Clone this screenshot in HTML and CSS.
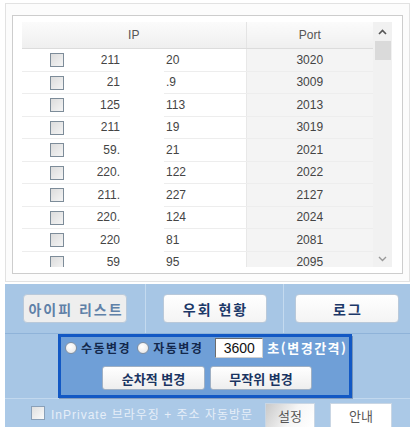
FILE: index.html
```html
<!DOCTYPE html>
<html lang="ko">
<head>
  <meta charset="UTF-8" />
  <title>IP 우회</title>
  <link rel="stylesheet" href="styles.css">
</head>
<body>
  <div class="frame">
    <div class="listbox">
      <div class="grid-wrap">
        <table class="grid">
          <colgroup>
            <col class="c-chk"><col class="c-ipa"><col class="c-gap"><col class="c-ipb"><col class="c-port">
          </colgroup>
          <thead>
            <tr><th colspan="4">IP</th><th class="port">Port</th></tr>
          </thead>
          <tbody>
            <tr><td><span class="chk"></span></td><td class="ipa">211</td><td class="gap"></td><td class="ipb">20</td><td class="port">3020</td></tr>
            <tr><td><span class="chk"></span></td><td class="ipa">21</td><td class="gap"></td><td class="ipb">.9</td><td class="port">3009</td></tr>
            <tr><td><span class="chk"></span></td><td class="ipa">125</td><td class="gap"></td><td class="ipb">113</td><td class="port">2013</td></tr>
            <tr><td><span class="chk"></span></td><td class="ipa">211</td><td class="gap"></td><td class="ipb">19</td><td class="port">3019</td></tr>
            <tr><td><span class="chk"></span></td><td class="ipa">59.</td><td class="gap"></td><td class="ipb">21</td><td class="port">2021</td></tr>
            <tr><td><span class="chk"></span></td><td class="ipa">220.</td><td class="gap"></td><td class="ipb">122</td><td class="port">2022</td></tr>
            <tr><td><span class="chk"></span></td><td class="ipa">211.</td><td class="gap"></td><td class="ipb">227</td><td class="port">2127</td></tr>
            <tr><td><span class="chk"></span></td><td class="ipa">220.</td><td class="gap"></td><td class="ipb">124</td><td class="port">2024</td></tr>
            <tr><td><span class="chk"></span></td><td class="ipa">220</td><td class="gap"></td><td class="ipb">81</td><td class="port">2081</td></tr>
            <tr><td><span class="chk"></span></td><td class="ipa">59</td><td class="gap"></td><td class="ipb">95</td><td class="port">2095</td></tr>
          </tbody>
        </table>
      </div>
      <div class="scrollbar">
        <svg class="arrow" width="9" height="6" viewBox="0 0 9 6"><path d="M1 5 L4.5 1.5 L8 5" fill="none" stroke="#555" stroke-width="1.6"/></svg>
        <div class="thumb"></div>
        <svg class="arrow down" width="9" height="6" viewBox="0 0 9 6"><path d="M1 1 L4.5 4.5 L8 1" fill="none" stroke="#999" stroke-width="1.4"/></svg>
      </div>
    </div>
  </div>

  <div class="panel">
    <div class="tabs">
      <div class="tab"><button class="tbtn active">아이피 리스트</button></div>
      <div class="tab"><button class="tbtn">우회 현황</button></div>
      <div class="tab last"><button class="tbtn">로그</button></div>
    </div>
    <div class="middle">
      <div class="popup">
        <div class="mode">
          <span class="radio"></span><span class="lbl">수동변경</span>
          <span class="radio second"></span><span class="lbl">자동변경</span>
          <input class="interval" type="text" value="3600">
          <span class="sec">초(변경간격)</span>
        </div>
        <div class="actions">
          <button class="pbtn">순차적 변경</button>
          <button class="pbtn">무작위 변경</button>
        </div>
      </div>
    </div>
    <div class="bottom">
      <span class="chk light"></span>
      <span class="private">InPrivate 브라우징 + 주소 자동방문</span>
      <button class="sbtn setting">설정</button>
      <button class="sbtn">안내</button>
    </div>
  </div>
</body>
</html>
```

FILE: styles.css
```css
body {
  margin: 0;
  background-color: white;
  font-family: "Liberation Sans", "Noto Sans CJK KR", sans-serif;
}

.frame {
  margin: 3px 5px 0 5px;
  padding: 11px 6px 7px 6px;
  border: 1px solid #e2e2e2;
  background-color: #fcfcfc;
}

.listbox {
  display: flex;
  padding: 6px 10px 6px 9px;
  border: 1px solid #cdcdcd;
  background-color: white;
}

.grid-wrap {
  width: 351px;
  height: 245px;
  overflow: hidden;
}

.grid {
  width: 351px;
  border-collapse: collapse;
  table-layout: fixed;
  font-size: 12px;
  color: #444;
}

.c-chk { width: 70px; }
.c-ipa { width: 28px; }
.c-gap { width: 44px; }
.c-ipb { width: 82px; }
.c-port { width: 127px; }

.grid th {
  height: 26px;
  padding: 0;
  font-weight: normal;
  color: #555;
  background: linear-gradient(#fbfbfb, #efefef);
  border-bottom: 1px solid #dcdcdc;
}

.grid th.port {
  border-left: 1px solid #e4e4e4;
}

.grid td {
  height: 21.5px;
  padding: 0;
  text-align: center;
  border-bottom: 1px solid #ededed;
  white-space: nowrap;
  overflow: hidden;
}

.grid td.ipa {
  text-align: right;
}

.grid td.gap {
  border-bottom-color: white;
}

.grid td.ipb {
  text-align: left;
  padding-left: 2px;
}

.grid td.port {
  background-color: #f4f4f4;
  border-left: 1px solid #e8e8e8;
}

.chk {
  display: inline-block;
  width: 12px;
  height: 12px;
  vertical-align: middle;
  border: 1px solid #7d8c99;
  background: linear-gradient(135deg, #dcdcdc, #f4f4f4);
}

.scrollbar {
  position: relative;
  width: 19px;
  height: 245px;
  background-color: #f1f1f1;
}

.arrow {
  display: block;
  margin: 7px auto 0 auto;
}

.arrow.down {
  position: absolute;
  left: 5px;
  bottom: 5px;
  margin: 0;
}

.thumb {
  margin: 6px 0 0 2px;
  width: 16px;
  height: 19px;
  background-color: #dadada;
}

/* blue control panel */
.panel {
  margin: 2px 5px 0 5px;
  height: 143px;
  background-color: #a7c6e5;
  font-family: "Noto Sans CJK KR", "Liberation Sans", sans-serif;
}

.tabs {
  display: flex;
  height: 49px;
  border-bottom: 1px solid #8fb3d9;
}

.tab {
  display: flex;
  align-items: center;
  justify-content: center;
  width: 140px;
  border-right: 1px solid #c4daef;
}

.tab:nth-child(2) {
  width: 137px;
}

.tab.last {
  flex: 1;
  border-right: none;
}

.tbtn {
  width: 104px;
  height: 29px;
  padding: 0 0 0 2px;
  font-family: inherit;
  font-size: 14px;
  font-weight: bold;
  letter-spacing: 2px;
  color: #1c3868;
  background: linear-gradient(#ffffff, #f4f4f4);
  border: 1px solid #b9c9da;
  border-radius: 4px;
}

.tbtn.active {
  color: #5f81a8;
  background: #eeeeee;
}

.middle {
  height: 64px;
  padding-left: 53px;
  border-bottom: 1px solid #c2d8ee;
}

.popup {
  box-sizing: border-box;
  width: 294px;
  height: 64px;
  padding-top: 1px;
  border: 3px solid #1258c4;
  background-color: #6f9fd7;
  box-shadow: 1px 2px 0 rgba(20, 50, 100, 0.35);
}

.mode {
  display: flex;
  align-items: center;
  height: 20px;
  padding-left: 4px;
  white-space: nowrap;
}

.mode > * {
  flex-shrink: 0;
}

.radio {
  box-sizing: border-box;
  width: 12px;
  height: 12px;
  border: 1px solid #7f8fa2;
  border-radius: 50%;
  background: radial-gradient(circle at 40% 35%, #ffffff, #e4e4e4);
}

.radio.second {
  margin-left: 6px;
}

.lbl {
  margin-left: 4px;
  font-size: 12px;
  font-weight: bold;
  letter-spacing: 1.5px;
  line-height: 20px;
  color: #13284c;
}

.interval {
  box-sizing: border-box;
  width: 48px;
  height: 20px;
  margin-left: 12px;
  padding: 0;
  font-family: "Liberation Sans", sans-serif;
  font-size: 14px;
  text-align: center;
  color: #111;
  background-color: white;
  border: 1px solid;
  border-color: #6c6c6c #cfcfcf #cfcfcf #6c6c6c;
}

.sec {
  margin-left: 4px;
  font-size: 13px;
  font-weight: bold;
  letter-spacing: 1.5px;
  line-height: 20px;
  color: white;
}

.actions {
  display: flex;
  gap: 5px;
  margin-top: 8px;
  padding-left: 41px;
}

.pbtn {
  width: 103px;
  height: 24px;
  padding: 0;
  font-family: inherit;
  font-size: 13px;
  font-weight: bold;
  color: #1a3461;
  background: linear-gradient(#ffffff, #eeeeee);
  border: 1px solid #9fb0c4;
  border-radius: 3px;
}

.pbtn + .pbtn {
  width: 102px;
}

.bottom {
  display: flex;
  align-items: center;
  height: 28px;
  padding: 0 18px 0 26px;
  background-color: #abc9e7;
}

.chk.light {
  border-color: #8aa0b8;
  background: linear-gradient(135deg, #e0e0e0, #fafafa);
}

.private {
  margin-left: 6px;
  font-family: "Liberation Sans", "Noto Sans CJK KR", sans-serif;
  font-size: 12px;
  letter-spacing: 1px;
  color: #e6eef8;
}

.sbtn {
  height: 25px;
  margin-top: 4px;
  padding: 0;
  font-family: inherit;
  font-size: 13px;
  color: #555;
  background-color: white;
  border: 1px solid #c9d6e4;
}

.setting {
  width: 50px;
  margin-left: auto;
  background: linear-gradient(120deg, #c9c9c9, #f6f6f6 55%, #ffffff);
}

.setting + .sbtn {
  width: 62px;
  margin-left: 15px;
}
```
